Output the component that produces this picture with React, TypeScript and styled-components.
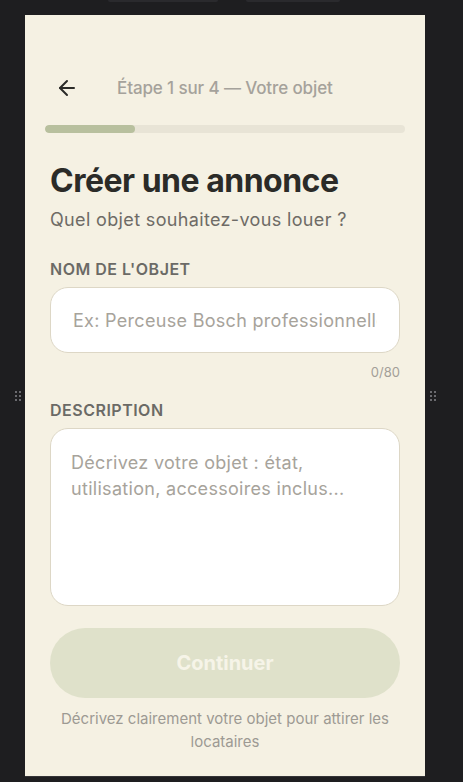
import React from "react";
import styled, { createGlobalStyle } from "styled-components";

const Global = createGlobalStyle`
  html, body { margin: 0; padding: 0; background: #1e1e20; }
  body { font-family: Inter, "Noto Sans", sans-serif; -webkit-font-smoothing: antialiased; }
  * { box-sizing: border-box; }
`;

const Page = styled.div`
  width: 463px;
  height: 782px;
  overflow: hidden;
  display: flex;
  flex-direction: column;
  background: #1e1e20;
`;

const TabStrip = styled.div`
  height: 15px;
  display: flex;
  align-items: flex-start;
  padding-left: 108px;
  gap: 28px;
`;

const Tab = styled.div<{ $w: number }>`
  width: ${(p) => p.$w}px;
  height: 2px;
  background: #2a2a2d;
  border-radius: 0 0 6px 6px;
`;

const Stage = styled.div`
  display: flex;
  align-items: stretch;
  height: 762px;
`;

const Gutter = styled.div<{ $w: number; $pad: number }>`
  width: ${(p) => p.$w}px;
  display: flex;
  align-items: center;
  padding-left: ${(p) => p.$pad}px;
`;

const Grip = styled.div`
  display: grid;
  grid-template-columns: 2px 2px;
  column-gap: 2px;
  row-gap: 2px;
  & > span {
    width: 2px;
    height: 2px;
    background: #6a6a6e;
  }
`;

const Frame = styled.div`
  width: 400px;
  height: 762px;
  background: #f5f1e3;
  display: flex;
  flex-direction: column;
  padding: 53px 20px 0;
  border-bottom: 1px solid #343437;
`;

const Header = styled.div`
  display: flex;
  align-items: center;
  height: 40px;
  gap: 28px;
`;

const BackButton = styled.button`
  width: 44px;
  height: 40px;
  border: none;
  background: transparent;
  display: flex;
  align-items: center;
  justify-content: center;
  padding: 0;
  color: #2b2b28;
`;

const StepText = styled.div`
  font-size: 17px;
  font-weight: 500;
  letter-spacing: -0.12px;
  color: #a5a29b;
`;

const Track = styled.div`
  margin-top: 17px;
  height: 8px;
  border-radius: 4px;
  background: #e8e4d6;
  overflow: hidden;
`;

const Fill = styled.div`
  height: 100%;
  background: #b8c09e;
  border-radius: 4px;
`;

const Body = styled.div`
  padding: 0 5px;
  display: flex;
  flex-direction: column;
`;

const Title = styled.h1`
  margin: 29px 0 0;
  font-size: 32px;
  line-height: 38px;
  font-weight: 700;
  color: #2b2b28;
  letter-spacing: -0.5px;
`;

const Subtitle = styled.p`
  margin: 7px 0 0;
  font-size: 18px;
  line-height: 26px;
  letter-spacing: 0.35px;
  color: #6e6b66;
`;

const Label = styled.label<{ $gap: number }>`
  display: block;
  margin-top: ${(p) => p.$gap}px;
  font-size: 16px;
  line-height: 20px;
  font-weight: 600;
  letter-spacing: 0.5px;
  text-transform: uppercase;
  color: #6b6a66;
`;

const TextInput = styled.input`
  margin-top: 8px;
  width: 100%;
  height: 66px;
  border: 1px solid #ddd7c6;
  border-radius: 18px;
  background: #ffffff;
  padding: 0 22px;
  font-family: inherit;
  font-size: 18px;
  letter-spacing: 0.3px;
  color: #2b2b28;
  outline: none;
  &::placeholder { color: #a7a39b; }
`;

const Counter = styled.div`
  margin-top: 10px;
  text-align: right;
  font-size: 13px;
  line-height: 18px;
  color: #a39f98;
`;

const TextArea = styled.textarea`
  margin-top: 8px;
  width: 100%;
  height: 178px;
  border: 1px solid #ddd7c6;
  border-radius: 18px;
  background: #ffffff;
  padding: 21px 20px;
  font-family: inherit;
  font-size: 18px;
  line-height: 26px;
  letter-spacing: 0.3px;
  color: #2b2b28;
  resize: none;
  outline: none;
  display: block;
  &::placeholder { color: #a7a39b; }
`;

const Primary = styled.button`
  margin-top: 22px;
  width: 100%;
  height: 70px;
  border: none;
  border-radius: 35px;
  background: #dfe1ca;
  color: #f6f4e8;
  font-family: inherit;
  font-size: 20px;
  font-weight: 700;
`;

const Hint = styled.p`
  margin: 9px 0 0;
  text-align: center;
  font-size: 15px;
  line-height: 23px;
  color: #9d9a93;
  padding: 0 4px;
`;

const ArrowLeft = () => (
  <svg width="24" height="24" viewBox="0 0 24 24" fill="none" stroke="currentColor" strokeWidth="2" strokeLinecap="round" strokeLinejoin="round">
    <path d="m12 19-7-7 7-7" />
    <path d="M19 12H5" />
  </svg>
);

const GripDots = () => (
  <Grip>
    {Array.from({ length: 6 }).map((_, i) => (
      <span key={i} />
    ))}
  </Grip>
);

export default function App() {
  const step = 1;
  const total = 4;
  return (
    <Page>
      <Global />
      <TabStrip>
        <Tab $w={110} />
        <Tab $w={94} />
      </TabStrip>
      <Stage>
        <Gutter $w={25} $pad={15}>
          <GripDots />
        </Gutter>
        <Frame>
          <Header>
            <BackButton aria-label="Retour">
              <ArrowLeft />
            </BackButton>
            <StepText>Étape {step} sur {total} — Votre objet</StepText>
          </Header>
          <Track>
            <Fill style={{ width: `${(step / total) * 100}%` }} />
          </Track>
          <Body>
            <Title>Créer une annonce</Title>
            <Subtitle>Quel objet souhaitez-vous louer ?</Subtitle>
            <Label $gap={26}>Nom de l'objet</Label>
            <TextInput placeholder="Ex: Perceuse Bosch professionnelle" />
            <Counter>0/80</Counter>
            <Label $gap={19}>Description</Label>
            <TextArea placeholder="Décrivez votre objet : état, utilisation, accessoires inclus..." />
            <Primary disabled>Continuer</Primary>
            <Hint>Décrivez clairement votre objet pour attirer les locataires</Hint>
          </Body>
        </Frame>
        <Gutter $w={38} $pad={5}>
          <GripDots />
        </Gutter>
      </Stage>
    </Page>
  );
}
